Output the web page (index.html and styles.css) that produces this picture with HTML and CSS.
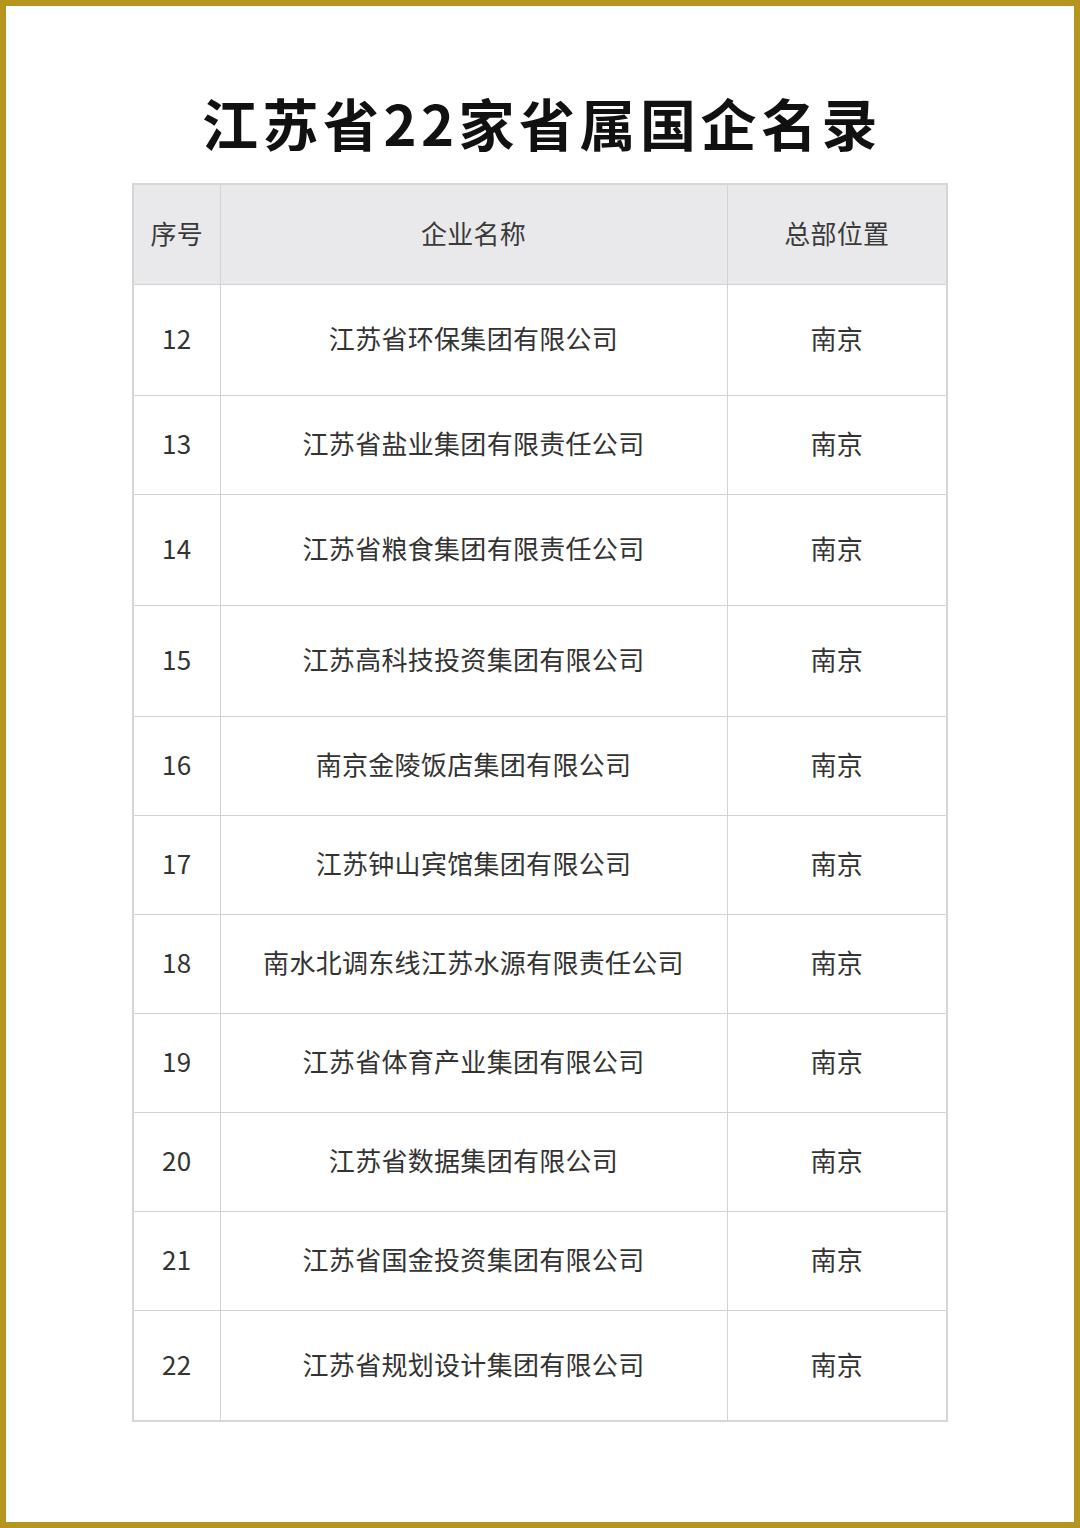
FILE: index.html
```html
<!DOCTYPE html>
<html lang="zh-CN">
<head>
<meta charset="utf-8">
<title>江苏省22家省属国企名录</title>
<link rel="stylesheet" href="styles.css">
</head>
<body>
<div class="page">
  <h1 class="title">江苏省22家省属国企名录</h1>
  <table class="list">
    <colgroup>
      <col class="c-no">
      <col class="c-name">
      <col class="c-loc">
    </colgroup>
    <thead>
      <tr class="head"><th>序号</th><th>企业名称</th><th>总部位置</th></tr>
    </thead>
    <tbody>
      <tr class="tall"><td>12</td><td>江苏省环保集团有限公司</td><td>南京</td></tr>
      <tr class="short"><td>13</td><td>江苏省盐业集团有限责任公司</td><td>南京</td></tr>
      <tr class="tall"><td>14</td><td>江苏省粮食集团有限责任公司</td><td>南京</td></tr>
      <tr class="tall"><td>15</td><td>江苏高科技投资集团有限公司</td><td>南京</td></tr>
      <tr class="short"><td>16</td><td>南京金陵饭店集团有限公司</td><td>南京</td></tr>
      <tr class="short"><td>17</td><td>江苏钟山宾馆集团有限公司</td><td>南京</td></tr>
      <tr class="short"><td>18</td><td>南水北调东线江苏水源有限责任公司</td><td>南京</td></tr>
      <tr class="short"><td>19</td><td>江苏省体育产业集团有限公司</td><td>南京</td></tr>
      <tr class="short"><td>20</td><td>江苏省数据集团有限公司</td><td>南京</td></tr>
      <tr class="short"><td>21</td><td>江苏省国金投资集团有限公司</td><td>南京</td></tr>
      <tr class="tall"><td>22</td><td>江苏省规划设计集团有限公司</td><td>南京</td></tr>
    </tbody>
  </table>
</div>
</body>
</html>
```
FILE: styles.css
```css
html, body {
  margin: 0;
  padding: 0;
  background: #ffffff;
}
.page {
  box-sizing: border-box;
  width: 1080px;
  height: 1528px;
  border: 6px solid #b5951d;
  background: #ffffff;
  padding-top: 88px;
  font-family: "Noto Sans CJK SC", "Noto Sans", sans-serif;
  color: #333333;
}
.title {
  margin: 0 0 33px 0;
  text-align: center;
  font-family: "Noto Sans CJK SC", sans-serif;
  font-weight: 700;
  font-size: 56px;
  line-height: 56px;
  letter-spacing: 4.5px;
  padding-left: 4px;
  color: #111111;
}
.list {
  margin-left: 126px;
  width: 814px;
  border-collapse: collapse;
  table-layout: fixed;
  border: 2px solid #d6d6d6;
}
.c-no { width: 87px; }
.c-name { width: 507px; }
.c-loc { width: 220px; }
.list th, .list td {
  border: 1.5px solid #d3d3d3;
  text-align: center;
  vertical-align: middle;
  font-size: 26px;
  font-weight: 400;
  letter-spacing: 0.3px;
  color: #333333;
  padding: 0 0 3px 0;
  line-height: 1;
}
.list th {
  background: #e9e9eb;
  color: #3a3a3a;
}
.head { height: 100px; }
.tall { height: 111px; }
.short { height: 99px; }
```
